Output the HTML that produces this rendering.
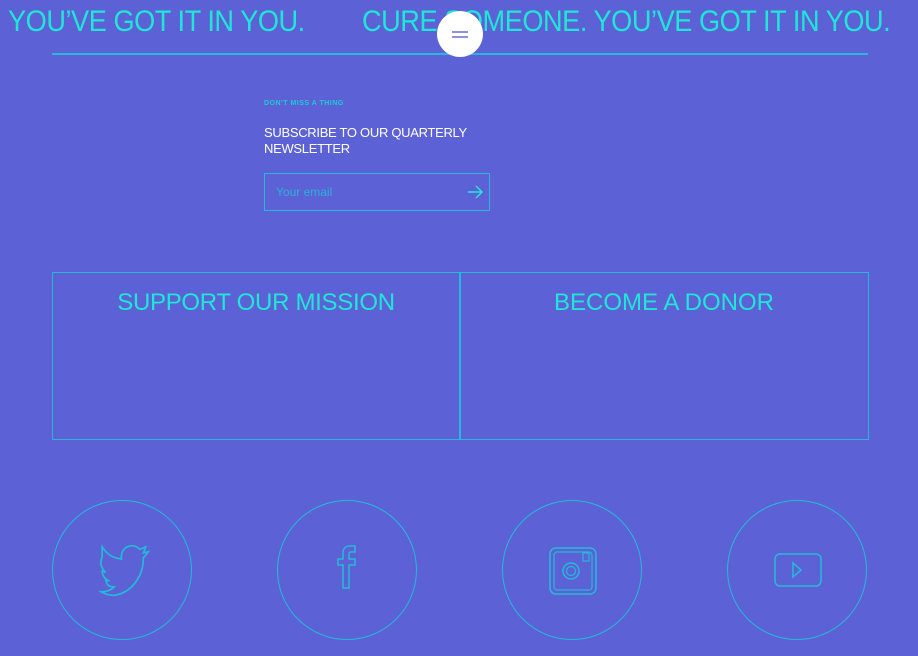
<!DOCTYPE html>
<html><head><style>
body{margin:0;width:918px;height:656px;background:#5c62d6;overflow:hidden;position:relative;font-family:"Liberation Sans",sans-serif;}
.a{position:absolute;}
.head{top:5px;font-size:30px;color:#1fe6d6;white-space:nowrap;transform-origin:0 0;transform:scaleX(0.905);letter-spacing:-0.5px;}
.circ{position:absolute;width:138px;height:138px;border:1.5px solid #23b9d8;border-radius:50%;top:500px;}
.circ svg{position:absolute;left:44px;top:44px;}
</style></head><body>
<div class="a head" style="left:8px">YOU’VE GOT IT IN YOU.</div>
<div class="a head" style="left:362px">CURE SOMEONE. YOU’VE GOT IT IN YOU.</div>
<div class="a" style="left:52px;top:53px;width:816px;height:1.5px;background:#29b6d8"></div>
<div class="a" style="left:437px;top:11px;width:46px;height:46px;border-radius:50%;background:#fff"></div>
<div class="a" style="left:452px;top:31px;width:16px;height:1.5px;background:#8d91e0"></div>
<div class="a" style="left:452px;top:36px;width:16px;height:1.5px;background:#8d91e0"></div>

<div class="a" style="left:264px;top:100px;font-size:7px;font-weight:bold;color:#1cc9d6;letter-spacing:0.5px">DON'T MISS A THING</div>
<div class="a" style="left:264px;top:125px;font-size:13px;line-height:16px;color:#fff;letter-spacing:-0.3px">SUBSCRIBE TO OUR QUARTERLY<br>NEWSLETTER</div>
<div class="a" style="left:264px;top:173px;width:224px;height:36px;border:1.5px solid #23b9d8"></div>
<div class="a" style="left:276px;top:185px;font-size:12px;color:#2bb0d8">Your email</div>
<svg class="a" style="left:466px;top:184px" width="18" height="16" viewBox="0 0 18 16"><path d="M2 8H16M10 2L16 8L10 14" fill="none" stroke="#1fe6d6" stroke-width="1.5"/></svg>

<div class="a" style="left:52px;top:272px;width:815px;height:166px;border:1.5px solid #23b9d8"></div>
<div class="a" style="left:459px;top:272px;width:1.5px;height:168px;background:#23b9d8"></div>
<div class="a" style="left:52px;top:289px;width:408px;text-align:center;font-size:24px;color:#1fe6d6;letter-spacing:-0.3px">SUPPORT OUR MISSION</div>
<div class="a" style="left:460px;top:289px;width:408px;text-align:center;font-size:24px;color:#1fe6d6;letter-spacing:0px">BECOME A DONOR</div>

<div class="circ" style="left:52px"><svg width="60" height="60" viewBox="0 0 52 52" style="left:42px;top:40px"><path d="M4 2C8 8 12 11 20 12C19 6 23 1 29 1C32 1 34 3 35 4L40 2L38 7L42 6C40 9 39 10 38 11C38 28 27 40 14 42C9 42 6 41 3 39C8 39 11 38 14 35C9 35 8 33 7 30L10 30C6 29 4 25 4 22L7 23C3 20 2 15 4 10Z" fill="none" stroke="#23b9d8" stroke-width="1.4" transform="translate(2,3) scale(1.05)"/></svg></div>
<div class="circ" style="left:277px"><svg width="52" height="52" viewBox="0 0 52 52"><path d="M22 53V30H17V24H22V18C22 13 25 11 29 11H34V17H30C28 17 28 18 28 19V24H34V30H28V53Z" fill="none" stroke="#23b9d8" stroke-width="1.5" transform="translate(-1,-10)"/></svg></div>
<div class="circ" style="left:502px"><svg width="52" height="52" viewBox="0 0 52 52"><rect x="3" y="3" width="46" height="46" rx="6" fill="none" stroke="#23b9d8" stroke-width="1.5"/><rect x="7" y="7" width="38" height="38" rx="3" fill="none" stroke="#23b9d8" stroke-width="1.2"/><rect x="36" y="8" width="6" height="8" fill="none" stroke="#23b9d8" stroke-width="1.2"/><circle cx="24" cy="26" r="8" fill="none" stroke="#23b9d8" stroke-width="1.5"/><circle cx="24" cy="26" r="4.5" fill="none" stroke="#23b9d8" stroke-width="1.2"/></svg></div>
<div class="circ" style="left:727px"><svg width="52" height="52" viewBox="0 0 52 52"><rect x="3" y="9" width="46" height="32" rx="5" fill="none" stroke="#23b9d8" stroke-width="1.5"/><path d="M21 18L29 25L21 32Z" fill="none" stroke="#23b9d8" stroke-width="1.5"/></svg></div>
</body></html>
